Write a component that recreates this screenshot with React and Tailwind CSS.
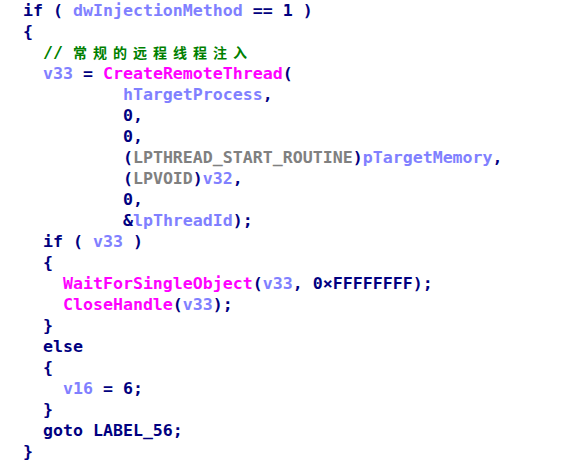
const C = {
  k: 'text-[#000080]',
  v: 'text-[#8080ff]',
  f: 'text-[#ff00ff]',
  t: 'text-[#808080]',
  g: 'text-[#008000]',
};

const lines = [
  [['k', 'if ( '], ['v', 'dwInjectionMethod'], ['k', ' == 1 )']],
  [['k', '{']],
  [['g', '  // '], ['cjk', '常规的远程线程注入']],
  [['v', '  v33'], ['k', ' = '], ['f', 'CreateRemoteThread'], ['k', '(']],
  [['v', '          hTargetProcess'], ['k', ',']],
  [['k', '          0,']],
  [['k', '          0,']],
  [['k', '          ('], ['t', 'LPTHREAD_START_ROUTINE'], ['k', ')'], ['v', 'pTargetMemory'], ['k', ',']],
  [['k', '          ('], ['t', 'LPVOID'], ['k', ')'], ['v', 'v32'], ['k', ',']],
  [['k', '          0,']],
  [['k', '          &'], ['v', 'lpThreadId'], ['k', ');']],
  [['k', '  if ( '], ['v', 'v33'], ['k', ' )']],
  [['k', '  {']],
  [['f', '    WaitForSingleObject'], ['k', '('], ['v', 'v33'], ['k', ', 0×FFFFFFFF);']],
  [['f', '    CloseHandle'], ['k', '('], ['v', 'v33'], ['k', ');']],
  [['k', '  }']],
  [['k', '  else']],
  [['k', '  {']],
  [['v', '    v16'], ['k', ' = 6;']],
  [['k', '  }']],
  [['k', '  goto LABEL_56;']],
  [['k', '}']],
];

function Token({ kind, text }) {
  if (kind === 'cjk') {
    return (
      <span className="text-[#008000] text-[14px] tracking-[6px] font-bold font-['Noto_Sans_CJK_SC',sans-serif]">
        {text}
      </span>
    );
  }
  return <span className={C[kind]}>{text}</span>;
}

export default function App() {
  return (
    <div className="w-[564px] h-[465px] overflow-hidden bg-white pl-[23px] font-['DejaVu_Sans_Mono',monospace] text-[16.6px] font-bold">
      {lines.map((line, i) => (
        <div key={i} className="h-[21px] leading-[21px] whitespace-pre">
          {line.map(([kind, text], j) => (
            <Token key={j} kind={kind} text={text} />
          ))}
        </div>
      ))}
    </div>
  );
}
